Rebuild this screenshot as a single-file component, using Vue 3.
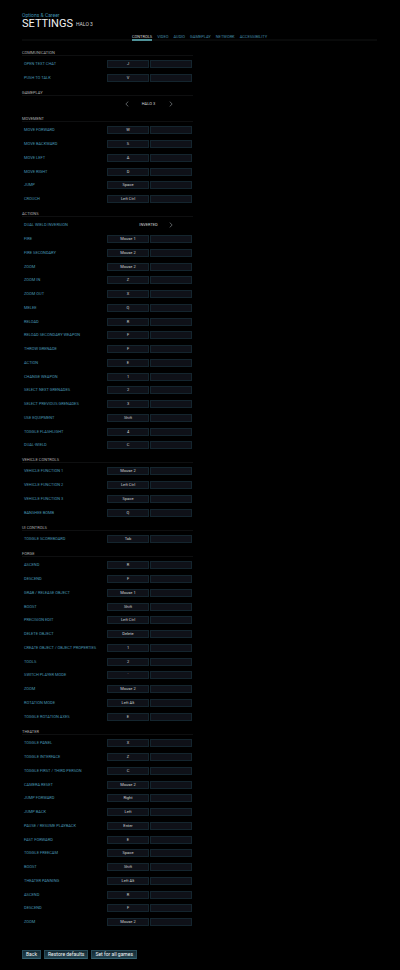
<script setup>
const tabs = ['Controls', 'Video', 'Audio', 'Gameplay', 'Network', 'Accessibility']

const sections = [
  { title: 'Communication', rows: [['Open text chat', 'J'], ['Push to talk', 'V']] },
  { title: 'Gameplay', rows: [['', 'Halo 3', 'both']] },
  {
    title: 'Movement',
    rows: [
      ['Move forward', 'W'], ['Move backward', 'S'], ['Move left', 'A'],
      ['Move right', 'D'], ['Jump', 'Space'], ['Crouch', 'Left Ctrl'],
    ],
  },
  {
    title: 'Actions',
    rows: [
      ['Dual wield inversion', 'Inverted', 'next'],
      ['Fire', 'Mouse 1'], ['Fire secondary', 'Mouse 2'], ['Zoom', 'Mouse 2'],
      ['Zoom in', 'Z'], ['Zoom out', 'X'], ['Melee', 'Q'], ['Reload', 'R'],
      ['Reload secondary weapon', 'F'], ['Throw grenade', 'F'], ['Action', 'E'],
      ['Change weapon', '1'], ['Select next grenades', '2'],
      ['Select previous grenades', '3'], ['Use equipment', 'Shift'],
      ['Toggle flashlight', '4'], ['Dual-wield', 'C'],
    ],
  },
  {
    title: 'Vehicle controls',
    rows: [
      ['Vehicle function 1', 'Mouse 2'], ['Vehicle function 2', 'Left Ctrl'],
      ['Vehicle function 3', 'Space'], ['Banshee bomb', 'Q'],
    ],
  },
  { title: 'UI controls', rows: [['Toggle scoreboard', 'Tab']] },
  {
    title: 'Forge',
    rows: [
      ['Ascend', 'R'], ['Descend', 'F'], ['Grab / release object', 'Mouse 1'],
      ['Boost', 'Shift'], ['Precision edit', 'Left Ctrl'], ['Delete object', 'Delete'],
      ['Create object / object properties', '1'], ['Tools', '2'],
      ['Switch player mode', '`'], ['Zoom', 'Mouse 2'],
      ['Rotation mode', 'Left Alt'], ['Toggle rotation axes', 'E'],
    ],
  },
  {
    title: 'Theater',
    rows: [
      ['Toggle panel', 'X'], ['Toggle interface', 'Z'],
      ['Toggle first / third person', 'C'], ['Camera reset', 'Mouse 2'],
      ['Jump forward', 'Right'], ['Jump back', 'Left'],
      ['Pause / resume playback', 'Enter'], ['Fast forward', 'E'],
      ['Toggle freecam', 'Space'], ['Boost', 'Shift'], ['Theater panning', 'Left Alt'],
      ['Ascend', 'R'], ['Descend', 'F'], ['Zoom', 'Mouse 2'],
    ],
  },
]

const actions = ['Back', 'Restore defaults', 'Set for all games']
</script>

<template>
  <main class="page">
    <header>
      <p class="crumb">Options &amp; Career</p>
      <div class="title">
        <h1>SETTINGS</h1>
        <span class="game">HALO 3</span>
      </div>
      <nav class="tabs">
        <a v-for="(tab, i) in tabs" :key="tab" href="#" class="tab" :class="{ active: i === 0 }">{{ tab }}</a>
      </nav>
    </header>

    <div class="content">
      <div class="panel">
        <section v-for="section in sections" :key="section.title">
          <h2>{{ section.title }}</h2>
          <ul class="rows">
            <li v-for="[label, value, arrows] in section.rows" :key="label" class="row">
              <span class="label">{{ label }}</span>
              <div v-if="arrows" class="picker">
                <button v-if="arrows === 'both'" class="arrow" aria-label="Previous">
                  <svg viewBox="0 0 4 6"><path d="M3.3 0.6 L0.8 3 L3.3 5.4" /></svg>
                </button>
                <span class="choice">{{ value }}</span>
                <button class="arrow" aria-label="Next">
                  <svg viewBox="0 0 4 6"><path d="M0.7 0.6 L3.2 3 L0.7 5.4" /></svg>
                </button>
              </div>
              <template v-else>
                <button class="key" :aria-label="`${label}: ${value}`">{{ value }}</button>
                <button class="key" :aria-label="`${label}, secondary`"></button>
              </template>
            </li>
          </ul>
        </section>
      </div>
    </div>

    <footer class="actions">
      <button v-for="action in actions" :key="action" class="action">{{ action }}</button>
    </footer>
  </main>
</template>

<style>
body {
  background: #000;
}
</style>

<style scoped>
* {
  box-sizing: border-box;
  margin: 0;
  padding: 0;
}
.page {
  padding: 13px 23px 11px 22px;
  font-family: Roboto, "Liberation Sans", sans-serif;
  font-size: 4px;
  line-height: 4px;
  color: #d0d3d4;
}
button {
  font: inherit;
  color: inherit;
  border: 0;
  background: none;
}
.crumb {
  font-size: 5px;
  line-height: 5px;
  color: #3f8eae;
}
.title {
  display: flex;
  align-items: center;
  gap: 3px;
}
h1 {
  font-size: 11px;
  line-height: 12px;
  font-weight: 400;
  color: #f2f2f2;
}
.game {
  font-size: 5px;
  line-height: 5px;
}
.tabs {
  display: flex;
  justify-content: center;
  gap: 5px;
  margin-top: 4px;
  border-bottom: 2px solid #090a0a;
}
.tab {
  height: 7px;
  margin-bottom: -2px;
  padding-top: 1px;
  color: #4088a6;
  text-decoration: none;
  text-transform: uppercase;
}
.tab.active {
  color: #d0d3d4;
  border-bottom: 2px solid #4f9198;
}
.content {
  display: grid;
  grid-template-columns: 171fr 184fr;
  padding-top: 7px;
}
h2 {
  height: 8px;
  margin-bottom: 4px;
  padding-top: 3px;
  font-size: 4px;
  line-height: 4px;
  font-weight: 400;
  text-transform: uppercase;
  color: #adadad;
  border-bottom: 1px solid #0e0f10;
}
.rows {
  list-style: none;
}
.row {
  display: grid;
  grid-template-columns: 84fr 42fr 42fr;
  column-gap: 1px;
  align-items: center;
  min-height: 8px;
  margin-bottom: 6px;
  padding-right: 1px;
}
.row:nth-child(4n):not(:last-child) {
  margin-bottom: 5px;
}
.label {
  padding-left: 2px;
  white-space: nowrap;
  text-transform: uppercase;
  color: #4794b2;
}
.key {
  height: 8px;
  line-height: 6px;
  text-align: center;
  background: #0f1118;
  border: 1px solid #14252e;
}
.picker {
  grid-column: span 2;
  display: grid;
  grid-template-columns: 1fr 36px 1fr;
  align-items: center;
  padding-right: 2px;
}
.choice {
  grid-column: 2;
  text-align: center;
  text-transform: uppercase;
}
.arrow {
  justify-self: start;
  display: flex;
  padding: 0 2px;
}
.arrow:first-child {
  justify-self: end;
}
.arrow svg {
  width: 4px;
  height: 6px;
  fill: none;
  stroke: #7f8588;
  stroke-width: 0.7;
}
.actions {
  display: flex;
  gap: 3px;
  margin-top: 18px;
}
.action {
  height: 9px;
  padding: 0 3px;
  font-size: 5px;
  line-height: 7px;
  color: #f0f4f5;
  background: linear-gradient(#162a34, #23434f);
  border: 1px solid #264b59;
  border-bottom-color: #35606f;
}
</style>
